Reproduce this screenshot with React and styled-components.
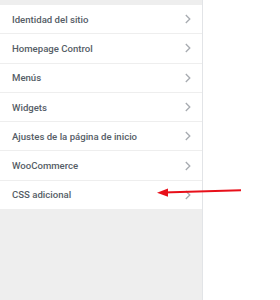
import React from "react";
import styled, { createGlobalStyle } from "styled-components";

const Global = createGlobalStyle`
  html, body {
    margin: 0;
    padding: 0;
    background: #fff;
  }
  #root {
    height: 300px;
  }
`;

const Page = styled.div`
  position: relative;
  display: flex;
  width: 280px;
  height: 300px;
  overflow: hidden;
`;

const Sidebar = styled.div`
  width: 203px;
  height: 300px;
  background: #eeeeee;
  border-right: 1px solid #e2e4e7;
  padding-top: 5px;
  box-sizing: border-box;
`;

const List = styled.ul`
  list-style: none;
  margin: 0;
  padding: 0;
`;

const Row = styled.li`
  display: flex;
  align-items: center;
  justify-content: space-between;
  height: 29.3px;
  box-sizing: border-box;
  padding: 0 11px 0 12px;
  background: #fff;
  border-bottom: 1px solid #eeeeee;
  font-family: Roboto, "Noto Sans", sans-serif;
  font-size: 9.6px;
  font-weight: 500;
  white-space: nowrap;
  color: #555d66;
`;

const Chevron = styled.svg`
  width: 6px;
  height: 10px;
  flex: none;
`;

const Arrow = styled.svg`
  position: absolute;
  left: 155px;
  top: 184px;
  width: 90px;
  height: 16px;
`;

const items = [
  "Identidad del sitio",
  "Homepage Control",
  "Menús",
  "Widgets",
  "Ajustes de la página de inicio",
  "WooCommerce",
  "CSS adicional",
];

export default function App() {
  return (
    <>
      <Global />
      <Page>
        <Sidebar>
          <List>
            {items.map((t) => (
              <Row key={t}>
                <span>{t}</span>
                <Chevron viewBox="0 0 6 10">
                  <path d="M0.8 1 L4.8 5 L0.8 9" fill="none" stroke="#a7abb0" strokeWidth="1.3" />
                </Chevron>
              </Row>
            ))}
          </List>
        </Sidebar>
        <Arrow viewBox="0 0 90 16">
          <line x1="8" y1="8.6" x2="86" y2="6.2" stroke="#e8101a" strokeWidth="2" />
          <polygon points="2,8.8 13,4.6 13,12.8" fill="#e8101a" />
        </Arrow>
      </Page>
    </>
  );
}
